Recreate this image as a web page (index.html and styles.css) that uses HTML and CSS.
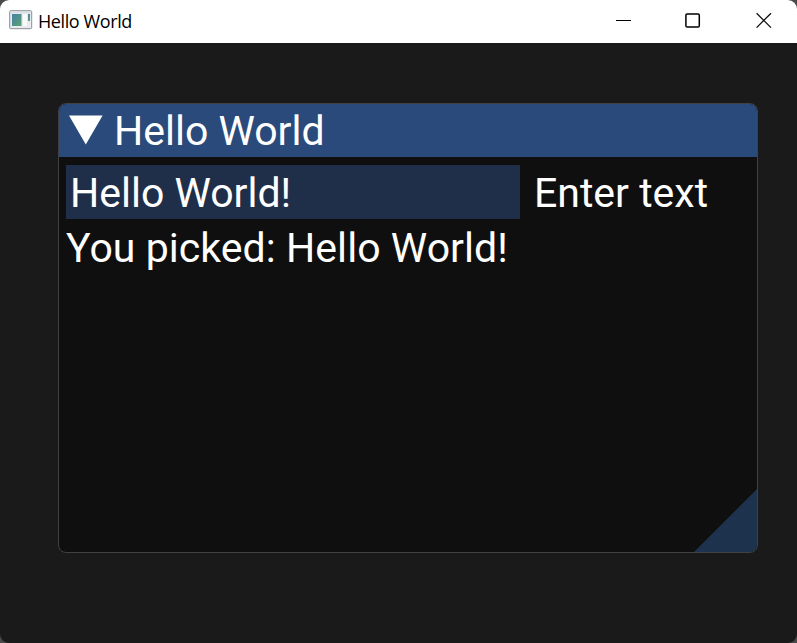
FILE: index.html
```html
<!DOCTYPE html>
<html lang="en">
<head>
<meta charset="utf-8">
<title>Hello World</title>
<link rel="stylesheet" href="styles.css">
</head>
<body>
<div class="window">
  <header class="titlebar">
    <svg class="app-icon" width="24" height="20" viewBox="0 0 24 20">
      <defs><linearGradient id="g" x1="0" y1="0" x2="1" y2="1"><stop offset="0" stop-color="#4a7fa8"/><stop offset="1" stop-color="#56a66e"/></linearGradient></defs>
      <rect x=".7" y=".7" width="22" height="18" rx="1" fill="#e9ebee" stroke="#8c9096"/>
      <rect x="1.5" y="1.5" width="20.4" height="2" fill="#dcdfe5"/>
      <rect x="3" y="4" width="9.5" height="12" fill="url(#g)"/>
      <rect x="14" y="4" width="4" height="12" fill="#fbfbfb"/>
      <rect x="19" y="4" width="2" height="7" fill="url(#g)"/>
    </svg>
    <span class="caption">Hello World</span>
    <div class="controls">
      <svg width="16" height="16" viewBox="0 0 16 16"><path d="M0 8.5H15" stroke="#000"/></svg>
      <svg width="16" height="16" viewBox="0 0 16 16"><rect x=".9" y="1.9" width="13.4" height="13.2" rx="1.3" fill="none" stroke="#000" stroke-width="1.5"/></svg>
      <svg width="16" height="16" viewBox="0 0 16 16"><path d="M.6 1.2L15 15.6M15 1.2L.6 15.6" stroke="#111" stroke-width="1.3"/></svg>
    </div>
  </header>
  <main class="client">
    <section class="panel">
      <div class="panel-title">
        <svg width="34" height="30" viewBox="0 0 34 30"><path d="M0 .4H33.6L16.8 29.4Z" fill="#fff"/></svg>
        <span class="label">Hello World</span>
      </div>
      <div class="panel-body">
        <div class="row">
          <div class="field">Hello World!</div>
          <span class="label">Enter text</span>
        </div>
        <div class="result">You picked: Hello World!</div>
      </div>
      <div class="grip"></div>
    </section>
  </main>
</div>
</body>
</html>
```
FILE: styles.css
```css
* { box-sizing: border-box; }
body { margin: 0; background: #4a4a4a; }
.window {
  width: 797px;
  height: 643px;
  display: flex;
  flex-direction: column;
  border-radius: 9px;
  overflow: hidden;
  background: #1a1a1a;
}
.titlebar {
  height: 43px;
  flex: none;
  display: flex;
  align-items: flex-start;
  background: #fff;
  padding: 10px 25px 0 9px;
}
.app-icon { flex: none; }
.caption {
  margin: -1px 0 0 5px;
  font: 18px/24px "Open Sans", "Noto Sans", sans-serif;
  letter-spacing: -0.4px;
  color: #000;
  white-space: nowrap;
}
.controls {
  margin: 2px 0 0 auto;
  display: flex;
  gap: 54px;
}
.controls svg:nth-child(2) { margin: 0 1px 0 -1px; }
.client { flex: 1; padding: 60px 39px 0 58px; }
.panel {
  position: relative;
  height: 450px;
  border: 1px solid #404045;
  border-radius: 8px;
  overflow: hidden;
  background: #0f0f0f;
  color: #fff;
  font: 41px/54px Roboto, sans-serif;
  white-space: nowrap;
}
.panel-title {
  height: 53px;
  display: flex;
  align-items: center;
  gap: 11px;
  padding-left: 10px;
  background: #294a7a;
}
.panel-title svg { margin-top: -1px; }
.panel-body { padding: 8px 7px; }
.row { display: flex; gap: 14px; line-height: 56px; height: 54px; }
.field {
  width: 454px;
  height: 54px;
  padding-left: 4px;
  background: #1f2f49;
}
.result { line-height: 58px; letter-spacing: 0.06px; }
.grip {
  position: absolute;
  right: 0;
  bottom: 0;
  width: 63px;
  height: 63px;
  background: #1d334d;
  clip-path: polygon(100% 0, 100% 100%, 0 100%);
}
```
